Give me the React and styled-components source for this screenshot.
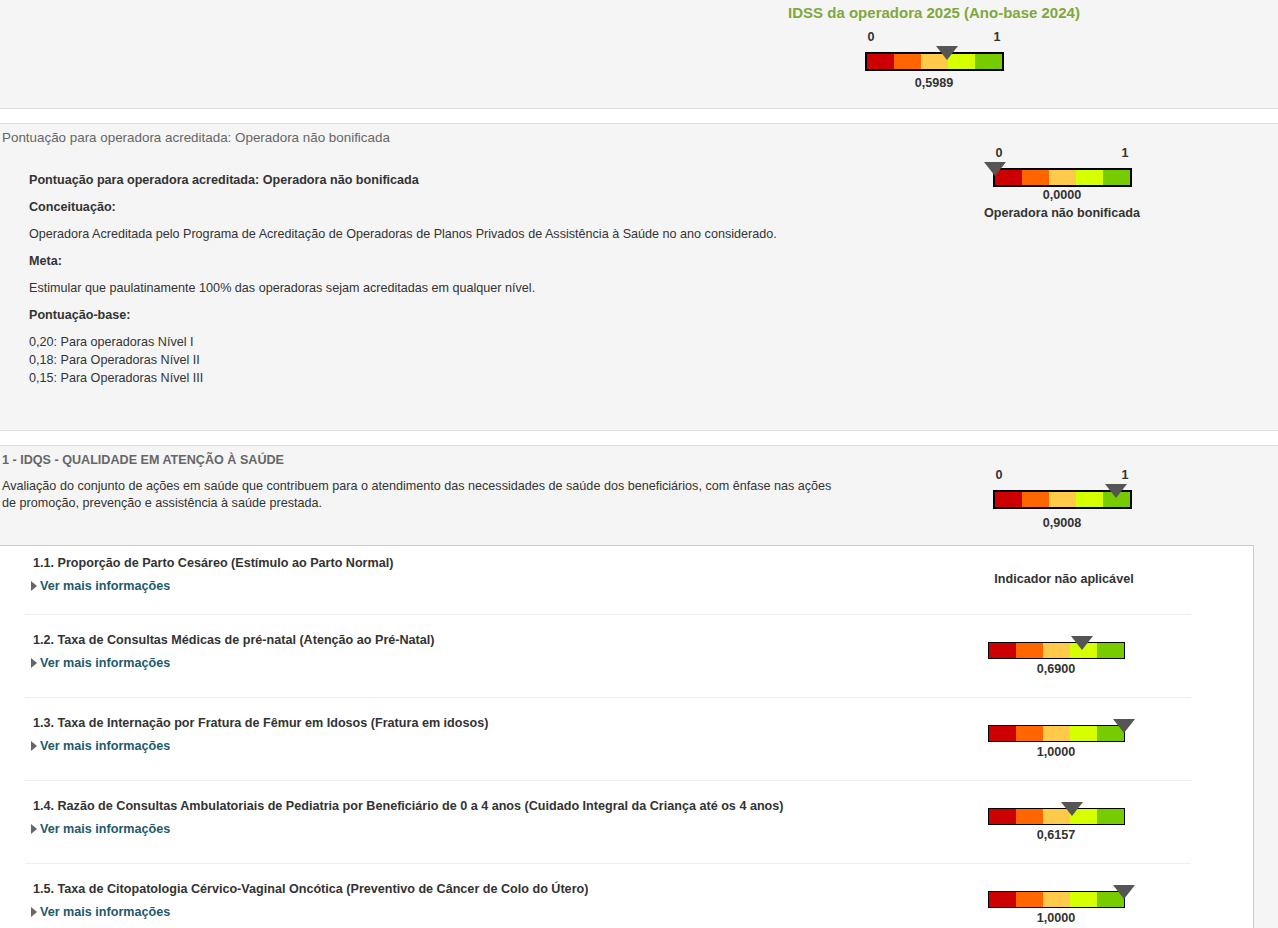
import React from "react";
import styled, { createGlobalStyle } from "styled-components";

const GlobalStyle = createGlobalStyle`
  html, body {
    margin: 0;
    padding: 0;
    background: #fff;
  }
  body {
    font-family: "Liberation Sans", Arial, sans-serif;
    font-size: 12.6px;
    color: #333;
  }
  * { box-sizing: border-box; }
`;

const SEGMENTS = ["#cc0000", "#ff6600", "#ffc94a", "#d6ff00", "#77cc00"];

/* ---------- gauge ---------- */

const GaugeWrap = styled.div`
  display: flex;
  flex-direction: column;
  align-items: center;
  width: ${(p) => p.$width}px;
  padding-top: ${(p) => p.$padTop || 0}px;
`;

const Scale = styled.div`
  display: flex;
  justify-content: space-between;
  width: 100%;
  padding: 0 3px;
  font-weight: bold;
  line-height: 14px;
  color: #333;
  margin-bottom: 8px;
`;

const Track = styled.div`
  position: relative;
  display: flex;
  width: 100%;
  height: ${(p) => 15 + p.$border * 2}px;
  border: ${(p) => p.$border}px solid #000;
`;

const Segment = styled.div`
  flex: 1;
  background: ${(p) => p.$color};
`;

const Marker = styled.div`
  position: absolute;
  top: ${(p) => p.$top}px;
  width: 0;
  height: 0;
  border-left: 11px solid transparent;
  border-right: 11px solid transparent;
  border-top: 14px solid #555;
  margin-left: -11px;
`;

const GaugeValue = styled.div`
  margin-top: ${(p) => p.$gap}px;
  font-weight: bold;
  line-height: 14px;
  color: #333;
  text-align: center;
`;

const GaugeCaption = styled.div`
  margin-top: 4px;
  font-weight: bold;
  line-height: 14px;
  color: #333;
  white-space: nowrap;
`;

function Gauge({ value, scale = true, border = 2, gap = 5, caption, padTop }) {
  const inner = 135;
  const width = inner + border * 2;
  return (
    <GaugeWrap $width={width} $padTop={padTop}>
      {scale && (
        <Scale>
          <span>0</span>
          <span>1</span>
        </Scale>
      )}
      <Track $border={border}>
        {SEGMENTS.map((c) => (
          <Segment key={c} $color={c} />
        ))}
        <Marker $top={-6 - border} style={{ left: value * inner }} />
      </Track>
      <GaugeValue $gap={gap}>{value.toFixed(4).replace(".", ",")}</GaugeValue>
      {caption && <GaugeCaption>{caption}</GaugeCaption>}
    </GaugeWrap>
  );
}

/* ---------- top summary ---------- */

const TopPanel = styled.header`
  display: flex;
  justify-content: flex-end;
  height: 109px;
  padding: 4px 194px 0 0;
  background: #f5f5f5;
  border-bottom: 1px solid #ddd;
`;

const Summary = styled.div`
  width: 320px;
  margin-right: -10px;
  display: flex;
  flex-direction: column;
  align-items: center;
`;

const SummaryTitle = styled.h1`
  margin: 0 0 8px;
  font-size: 15px;
  line-height: 18px;
  font-weight: bold;
  color: #80a83c;
  white-space: nowrap;
`;

/* ---------- dimension panels ---------- */

const Panel = styled.section`
  margin-top: 14px;
  background: #f5f5f5;
  border-top: 1px solid #ddd;
  border-bottom: ${(p) => (p.$open ? "none" : "1px solid #ddd")};
  padding: 6px 0 ${(p) => p.$padBottom || 0}px;
`;

const PanelHeading = styled.h2`
  margin: 0 0 0 2px;
  font-size: ${(p) => (p.$strong ? "12.6px" : "13.4px")};
  line-height: 16px;
  color: #666;
  font-weight: ${(p) => (p.$strong ? "bold" : "normal")};
`;

const PanelRow = styled.div`
  display: flex;
  justify-content: space-between;
  align-items: flex-start;
  padding-bottom: ${(p) => p.$padBottom || 0}px;
`;

const GaugeColumn = styled.div`
  width: 200px;
  margin-right: 116px;
  display: flex;
  justify-content: center;
`;

const Details = styled.div`
  padding: 25px 0 0 29px;
`;

const Para = styled.p`
  margin: 0 0 9px;
  line-height: 18px;
  font-weight: ${(p) => (p.$strong ? "bold" : "normal")};
`;

const ScoreList = styled.div`
  line-height: 18px;
`;

const Description = styled.p`
  margin: 10px 0 0 2px;
  width: 840px;
  line-height: 17px;
`;

/* ---------- indicator card ---------- */

const Card = styled.div`
  width: calc(100% - 24px);
  background: #fff;
  border-top: 1px solid #ccc;
  border-right: 1px solid #ccc;
  padding: 0 62px 0 25px;
`;

const Indicator = styled.div`
  display: flex;
  justify-content: space-between;
  align-items: flex-start;
  padding: 17px 0 21px 8px;
  border-top: 1px solid #eee;

  &:first-child {
    padding-top: 9px;
    padding-bottom: 20px;
    border-top: none;
  }
`;

const IndicatorText = styled.div`
  display: flex;
  flex-direction: column;
`;

const IndicatorTitle = styled.div`
  font-weight: bold;
  line-height: 16px;
  color: #333;
`;

const MoreLink = styled.a`
  display: flex;
  align-items: center;
  gap: 3px;
  margin: 7px 0 0 -2px;
  font-weight: bold;
  line-height: 16px;
  color: #1d5a6d;
  text-decoration: none;
  cursor: pointer;

  &::before {
    content: "";
    width: 0;
    height: 0;
    border-top: 5px solid transparent;
    border-bottom: 5px solid transparent;
    border-left: 6px solid #666;
  }
`;

const IndicatorGauge = styled.div`
  width: 270px;
  display: flex;
  justify-content: center;
`;

const NotApplicable = styled.div`
  margin-top: 17px;
  padding-left: 16px;
  font-weight: bold;
  line-height: 14px;
  color: #333;
`;

const indicators = [
  { title: "1.1. Proporção de Parto Cesáreo (Estímulo ao Parto Normal)", value: null },
  { title: "1.2. Taxa de Consultas Médicas de pré-natal (Atenção ao Pré-Natal)", value: 0.69 },
  { title: "1.3. Taxa de Internação por Fratura de Fêmur em Idosos (Fratura em idosos)", value: 1 },
  {
    title:
      "1.4. Razão de Consultas Ambulatoriais de Pediatria por Beneficiário de 0 a 4 anos (Cuidado Integral da Criança até os 4 anos)",
    value: 0.6157,
  },
  {
    title: "1.5. Taxa de Citopatologia Cérvico-Vaginal Oncótica (Preventivo de Câncer de Colo do Útero)",
    value: 1,
  },
];

export default function App() {
  return (
    <>
      <GlobalStyle />
      <TopPanel>
        <Summary>
          <SummaryTitle>IDSS da operadora 2025 (Ano-base 2024)</SummaryTitle>
          <Gauge value={0.5989} gap={5} />
        </Summary>
      </TopPanel>

      <Panel $padBottom={43}>
        <PanelHeading>Pontuação para operadora acreditada: Operadora não bonificada</PanelHeading>
        <PanelRow>
          <Details>
            <Para $strong>Pontuação para operadora acreditada: Operadora não bonificada</Para>
            <Para $strong>Conceituação:</Para>
            <Para>
              Operadora Acreditada pelo Programa de Acreditação de Operadoras de Planos Privados de
              Assistência à Saúde no ano considerado.
            </Para>
            <Para $strong>Meta:</Para>
            <Para>Estimular que paulatinamente 100% das operadoras sejam acreditadas em qualquer nível.</Para>
            <Para $strong>Pontuação-base:</Para>
            <ScoreList>
              <div>0,20: Para operadoras Nível I</div>
              <div>0,18: Para Operadoras Nível II</div>
              <div>0,15: Para Operadoras Nível III</div>
            </ScoreList>
          </Details>
          <GaugeColumn>
            <Gauge value={0} gap={1} caption="Operadora não bonificada" />
          </GaugeColumn>
        </PanelRow>
      </Panel>

      <Panel $open>
        <PanelHeading $strong>1 - IDQS - QUALIDADE EM ATENÇÃO À SAÚDE</PanelHeading>
        <PanelRow $padBottom={15}>
          <Description>
            Avaliação do conjunto de ações em saúde que contribuem para o atendimento das necessidades
            de saúde dos beneficiários, com ênfase nas ações de promoção, prevenção e assistência à
            saúde prestada.
          </Description>
          <GaugeColumn>
            <Gauge value={0.9008} gap={7} />
          </GaugeColumn>
        </PanelRow>
        <Card>
          {indicators.map((item) => (
            <Indicator key={item.title}>
              <IndicatorText>
                <IndicatorTitle>{item.title}</IndicatorTitle>
                <MoreLink>Ver mais informações</MoreLink>
              </IndicatorText>
              <IndicatorGauge>
                {item.value === null ? (
                  <NotApplicable>Indicador não aplicável</NotApplicable>
                ) : (
                  <Gauge value={item.value} scale={false} border={1} gap={3} padTop={10} />
                )}
              </IndicatorGauge>
            </Indicator>
          ))}
        </Card>
      </Panel>
    </>
  );
}
